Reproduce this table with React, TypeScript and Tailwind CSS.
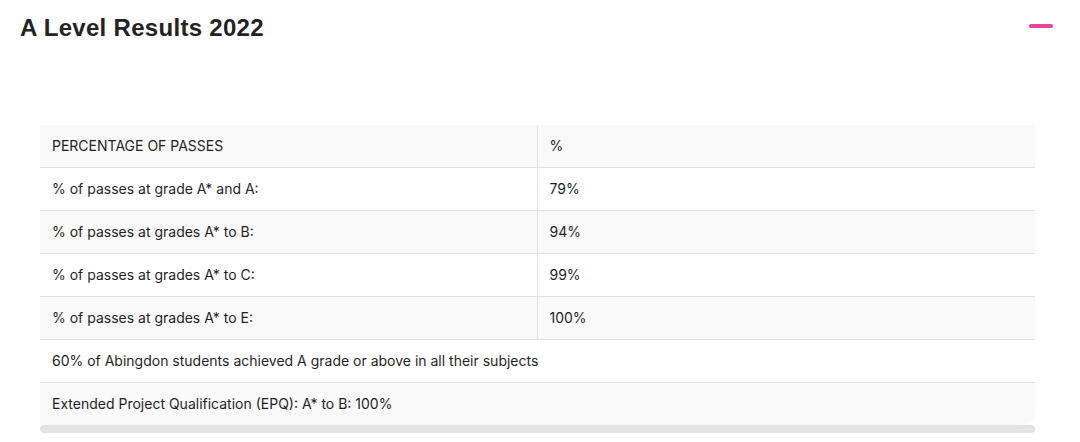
const rows: [string, string][] = [
  ["% of passes at grade A* and A:", "79%"],
  ["% of passes at grades A* to B:", "94%"],
  ["% of passes at grades A* to C:", "99%"],
  ["% of passes at grades A* to E:", "100%"],
];

function App() {
  return (
    <div className="w-[1080px] h-[442px] bg-white text-[#1f1f1f] font-['Inter',sans-serif]">
      <div className="flex items-start justify-between pl-5 pr-[27px] pt-[13px]">
        <h1 className="text-[24px] leading-[30px] font-bold tracking-[0.3px] text-[#232323] font-['Liberation_Sans',Arial,sans-serif]">
          A Level Results 2022
        </h1>
        <span className="mt-[11px] block h-1 w-6 rounded-full bg-[#e8449a]" />
      </div>
      <div className="mt-[82px] ml-10 w-[995px]">
        <table className="w-full border-collapse text-[14px]">
          <tbody>
            <tr className="bg-[#f9f9f9] h-[42px]">
              <td className="w-[497px] px-3 border-r border-[#e2e2e2]">PERCENTAGE OF PASSES</td>
              <td className="px-3">%</td>
            </tr>
            {rows.map(([label, value], i) => (
              <tr
                key={label}
                className={`h-[43px] border-t border-[#e2e2e2] ${i % 2 === 0 ? "bg-white" : "bg-[#f9f9f9]"}`}
              >
                <td className="px-3 border-r border-[#e2e2e2]">{label}</td>
                <td className="px-3">{value}</td>
              </tr>
            ))}
            <tr className="h-[43px] border-t border-[#e2e2e2] bg-white">
              <td colSpan={2} className="px-3">
                60% of Abingdon students achieved A grade or above in all their subjects
              </td>
            </tr>
            <tr className="h-[43px] border-t border-[#e2e2e2] bg-[#f9f9f9]">
              <td colSpan={2} className="px-3 rounded-br-[14px]">
                Extended Project Qualification (EPQ): A* to B: 100%
              </td>
            </tr>
          </tbody>
        </table>
        <div className="h-2 w-full rounded-full bg-[#e3e3e3]" />
      </div>
    </div>
  );
}

export default App;
